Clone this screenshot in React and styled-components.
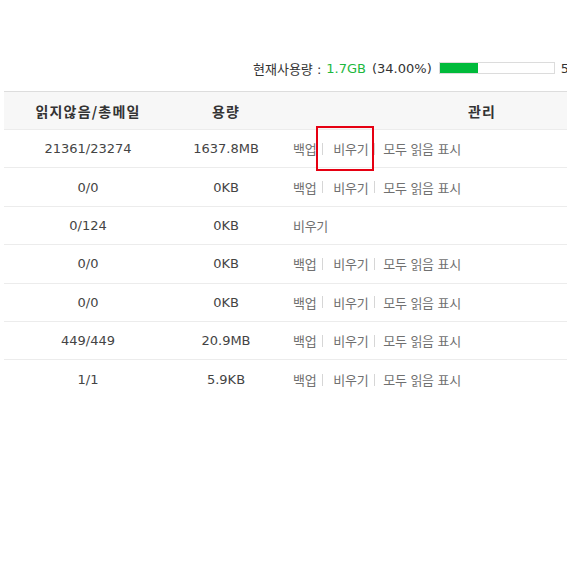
import React from "react";
import styled, { createGlobalStyle } from "styled-components";

const GlobalStyle = createGlobalStyle`
  html, body {
    margin: 0;
    padding: 0;
    background: #ffffff;
    overflow: hidden;
  }
  body {
    font-family: "DejaVu Sans", "Noto Sans CJK KR", sans-serif;
    color: #333333;
  }
`;

const Page = styled.div`
  width: 680px;
  padding: 58px 0 0 4px;
`;

const UsageRow = styled.div`
  display: flex;
  align-items: center;
  height: 20px;
  padding-left: 249px;
  font-size: 13px;
  color: #333333;
  white-space: nowrap;
`;

const UsageValue = styled.span`
  color: #1db83e;
  margin: 0 6px 0 5px;
`;

const UsageBar = styled.div`
  flex: none;
  width: 114px;
  height: 10px;
  margin-left: 7px;
  border: 1px solid #dcdcdc;
  background: #ffffff;
  display: flex;
`;

const UsageFill = styled.div`
  height: 100%;
  background: #00bb3b;
`;

const UsageTotal = styled.span`
  margin-left: 6px;
`;

const Table = styled.div`
  margin-top: 13px;
  border-top: 1px solid #dddddd;
`;

const Row = styled.div`
  display: grid;
  grid-template-columns: 168px 108px 1fr;
  align-items: center;
  height: ${(p) => (p.$head ? "38px" : "38.4px")};
  background: ${(p) => (p.$head ? "#f7f7f7" : "#ffffff")};
  border-bottom: ${(p) => (p.$last ? "none" : "1px solid #ececec")};
  box-sizing: border-box;
`;

const HeadCell = styled.div`
  text-align: center;
  font-family: "Noto Sans CJK KR", sans-serif;
  font-size: 14px;
  font-weight: bold;
  letter-spacing: 1.2px;
  color: #333333;
`;

const Cell = styled.div`
  text-align: center;
  font-size: 13px;
  color: #444444;
`;

const Actions = styled.div`
  display: flex;
  align-items: center;
  padding-left: 13px;
  font-size: 13px;
  color: #707070;
  letter-spacing: -0.3px;
`;

const Action = styled.span`
  position: relative;
`;

const Divider = styled.span`
  width: 1px;
  height: 12px;
  background: #d6d6d6;
  margin: 0 ${(p) => p.$right || 10}px 0 6px;
`;

const Highlight = styled.span`
  position: absolute;
  left: -17px;
  right: -6px;
  top: -13px;
  bottom: -13px;
  border: 2px solid #e60012;
  pointer-events: none;
`;

const rows = [
  { count: "21361/23274", size: "1637.8MB", full: true, mark: true },
  { count: "0/0", size: "0KB", full: true },
  { count: "0/124", size: "0KB", full: false },
  { count: "0/0", size: "0KB", full: true },
  { count: "0/0", size: "0KB", full: true },
  { count: "449/449", size: "20.9MB", full: true },
  { count: "1/1", size: "5.9KB", full: true },
];

function App() {
  return (
    <>
      <GlobalStyle />
      <Page>
        <UsageRow>
          현재사용량 :<UsageValue>1.7GB</UsageValue>(34.00%)
          <UsageBar>
            <UsageFill style={{ width: "34%" }} />
          </UsageBar>
          <UsageTotal>5GB</UsageTotal>
        </UsageRow>
        <Table>
          <Row $head>
            <HeadCell>읽지않음/총메일</HeadCell>
            <HeadCell>용량</HeadCell>
            <HeadCell>관리</HeadCell>
          </Row>
          {rows.map((r, i) => (
            <Row key={i} $last={i === rows.length - 1}>
              <Cell>{r.count}</Cell>
              <Cell>{r.size}</Cell>
              <Actions>
                {r.full ? (
                  <>
                    <Action>백업</Action>
                    <Divider />
                    <Action>
                      비우기
                      {r.mark && <Highlight />}
                    </Action>
                    <Divider $right={8} />
                    <Action>모두 읽음 표시</Action>
                  </>
                ) : (
                  <Action>비우기</Action>
                )}
              </Actions>
            </Row>
          ))}
        </Table>
      </Page>
    </>
  );
}

export default App;
